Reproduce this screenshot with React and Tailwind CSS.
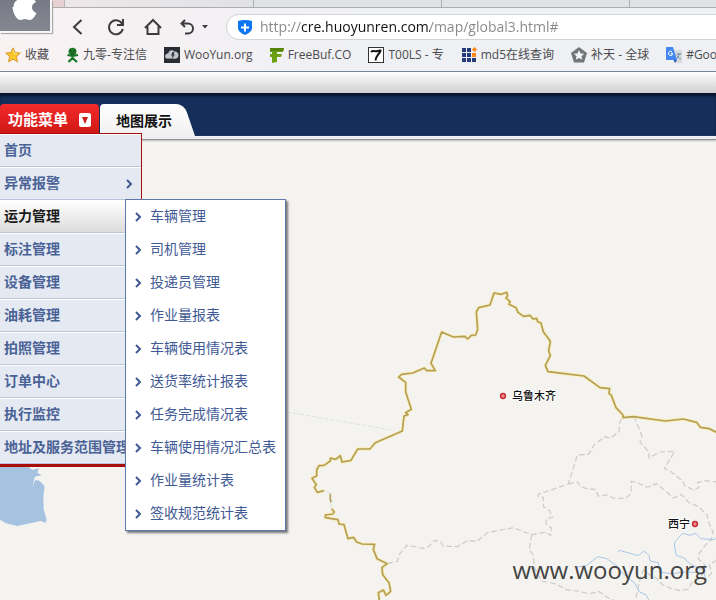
import React from "react";

const menuItems = [
  { label: "首页" },
  { label: "异常报警", arrow: true },
  { label: "运力管理", active: true },
  { label: "标注管理" },
  { label: "设备管理" },
  { label: "油耗管理" },
  { label: "拍照管理" },
  { label: "订单中心" },
  { label: "执行监控" },
  { label: "地址及服务范围管理" },
];

const subItems = [
  "车辆管理",
  "司机管理",
  "投递员管理",
  "作业量报表",
  "车辆使用情况表",
  "送货率统计报表",
  "任务完成情况表",
  "车辆使用情况汇总表",
  "作业量统计表",
  "签收规范统计表",
];

function Chevron() {
  return (
    <svg viewBox="0 0 7 10" className="h-[10px] w-[7px] shrink-0" fill="none" stroke="#3f5a94" strokeWidth="2" aria-hidden="true">
      <path d="M1 1l4 4-4 4" />
    </svg>
  );
}

function StarIcon() {
  return (
    <svg viewBox="0 0 16 16" className="size-4" aria-hidden="true">
      <path d="M8 .8l2.1 4.8 5.2.5-3.9 3.5 1.1 5.2L8 12.1l-4.5 2.7 1.1-5.2L.7 6.1l5.2-.5z" fill="#fbc52d" stroke="#d79a2b" strokeWidth="1" strokeLinejoin="round" />
      <path d="M8 3.2l1.1 3.2 3 .4" fill="none" stroke="#ffe98c" />
    </svg>
  );
}

function FigureIcon() {
  return (
    <svg viewBox="0 0 12 16" className="h-4 w-[13px]" aria-hidden="true">
      <path d="M6 9L1 8M6 9l5.500-1M6 8v4M6 11l-4 4M6 11l4.500 4" stroke="#137526" strokeWidth="2.200" />
      <ellipse cx="6" cy="4.600" rx="4" ry="3.900" fill="#1f7a2b" />
      <path d="M3.400 3.200l2 1.600M8.600 3.200l-2 1.600M4.500 7h3" stroke="#0a3d16" />
    </svg>
  );
}

function CloudIcon() {
  return (
    <svg viewBox="0 0 16 16" className="size-4" aria-hidden="true">
      <rect width="16" height="16" fill="#272c35" />
      <path d="M2 11.500C0 9 2 6.500 4.200 6.600 4.500 3 8.500 2 10.300 4.600c2.600-.3 4.500 2 4.200 4.200-.2 2-1.700 2.800-3.500 2.900z" fill="#c3c6ca" />
      <path d="M8.500 5L7 8.500h1.500L7.500 12.500l3.500-5H9.500l1-2.500z" fill="#343943" />
    </svg>
  );
}

function FIcon() {
  return (
    <svg viewBox="0 0 14 16" className="h-4 w-[14px]" aria-hidden="true">
      <path d="M0 1h14l-1 4H7v2h5l-1 3H7v5l-5 1v-6H0V7h2V5H0z" fill="#6ba011" />
      <path d="M0 1h14l-1 3H0z" fill="#548507" />
    </svg>
  );
}

function SevenIcon() {
  return (
    <svg viewBox="0 0 16 16" className="size-4" aria-hidden="true">
      <rect x=".5" y=".5" width="15" height="15" fill="#fff" stroke="#333" />
      <path d="M3 5c2-2.500 4 0 6-.8 1.500-.6 2.500-1 3.500-.7C12 7 8 8 7.500 13.500" fill="none" stroke="#111" strokeWidth="2" />
    </svg>
  );
}

function GridIcon() {
  return (
    <svg viewBox="0 0 16 16" className="size-4" aria-hidden="true">
      <g fill="#253a78">
        <path d="M1 1h4v4H1zM6 1h4v4H6zM1 6h4v4H1zM6 6h4v4H6zM1 11h4v4H1zM6 11h4v4H6zM11 11h4v4h-4z" />
      </g>
      <path d="M11 6h4v4h-4zM13.500 0l2.500 2.500L13.500 5 11 2.500z" fill="#ff8510" />
    </svg>
  );
}

function PentagonIcon() {
  return (
    <svg viewBox="0 0 16 16" className="size-4" aria-hidden="true">
      <path d="M8 0l8 6-3 9.500H3L0 6z" fill="#747577" />
      <path d="M8 3l1.500 3.400 3.700.3-2.800 2.500.9 3.600L8 10.900l-3.300 1.900.9-3.600-2.800-2.500 3.700-.3z" fill="#f4f5f7" />
    </svg>
  );
}

function TranslateIcon() {
  return (
    <svg viewBox="0 0 16 16" className="size-4" aria-hidden="true">
      <path d="M7 3h9v13H9z" fill="#d8dadd" />
      <path d="M10.500 7h5M13 6v1c0 2-1 4-3 5M11 8.500c1 2 2 3 4 3.500" stroke="#6f8ea5" fill="none" />
      <path d="M0 1q0-1 1-1h6l4 13H1q-1 0-1-1z" fill="#4587f1" />
      <path d="M7.500 13H11l-2 3z" fill="#2857b8" />
      <path d="M6 4.800a2.100 2.100 0 1 0 .7 1.700H4.800" stroke="#fff" fill="none" />
    </svg>
  );
}

const bookmarks = [
  { label: "收藏", Icon: StarIcon },
  { label: "九零-专注信", Icon: FigureIcon },
  { label: "WooYun.org", Icon: CloudIcon },
  { label: "FreeBuf.CO", Icon: FIcon },
  { label: "T00LS - 专", Icon: SevenIcon },
  { label: "md5在线查询", Icon: GridIcon },
  { label: "补天 - 全球", Icon: PentagonIcon },
  { label: "#Goo", Icon: TranslateIcon },
];

function BrowserChrome() {
  return (
    <header className="relative h-[72px] overflow-hidden border-b border-[#77869a] bg-linear-to-r from-[#f9f2f3] via-[#eff0f4] to-[#eef0f3] font-['Open_Sans','Noto_Sans_CJK_SC',sans-serif]">
      <div className="flex h-2 border-b border-[#acadb1] bg-[#e1e2e5]">
        <span className="w-[65px] shrink-0 border-r border-[#b9b5b8] bg-[#e8d1d3]" />
        <span className="w-[189px] shrink-0 border-r border-[#acadb1] bg-linear-to-r from-[#eee7e9] to-[#e1e2e5]" />
        <span className="w-[188px] shrink-0 border-r border-[#acadb1]" />
        <span className="w-[188px] shrink-0 border-r border-[#acadb1]" />
      </div>

      <div className="absolute top-0 left-0 h-[33px] w-[52px] border-r-2 border-b-2 border-[#f6f4f5] bg-linear-to-b from-[#777985] to-[#858791] shadow-[1px_1px_1px_#aaa]">
        <svg viewBox="0 0 52 32" className="h-8 w-[52px]" aria-label="Apple" role="img">
          <path d="M13.500 7C13.500 2 17-1 21-1c2 0 3 1 5 1s3-1 5-1c2 0 4 1 5 3-3 1.500-4 3-4 5.500 0 2.500 1.500 4.500 4.500 5.500-1.500 3.500-4 7-7 7-2 0-2.500-1-4.500-1s-2.500 1-4.500 1c-4 0-8-8-8-13z" fill="#fff" />
        </svg>
      </div>

      <div className="flex h-[35px] items-center pt-[3px] text-[#3c3c3e]">
        <div className="flex w-[226px] shrink-0 items-center pl-[71px]">
          <button type="button" aria-label="后退" className="mr-6">
            <svg viewBox="0 0 12 16" className="h-4 w-3" fill="none" stroke="currentColor" strokeWidth="2">
              <path d="M10.500 1L3 8l7.500 7" />
            </svg>
          </button>
          <button type="button" aria-label="刷新" className="mr-[19px]">
            <svg viewBox="0 0 18 18" className="size-[18px]" fill="none" stroke="currentColor" strokeWidth="2">
              <path d="M15.200 6A7 7 0 1 0 15.800 11M16 1v6h-6" />
            </svg>
          </button>
          <button type="button" aria-label="主页" className="mr-[18px]">
            <svg viewBox="0 0 18 18" className="size-[18px]" fill="none" stroke="currentColor" strokeWidth="2">
              <path d="M1 10l8-8 8 8M3.500 8.500V16h11V8.500" />
            </svg>
          </button>
          <button type="button" aria-label="恢复" className="flex items-center gap-2">
            <svg viewBox="0 0 14 16" className="h-4 w-[14px]" fill="none" stroke="currentColor" strokeWidth="2">
              <path d="M5 1L1.500 4.500 5 8M1.500 4.500H8a4.800 4.800 0 0 1 0 10H5" />
            </svg>
            <svg viewBox="0 0 6 4" className="h-1 w-[6px]" aria-hidden="true">
              <path d="M0 0h6L3 3.500z" fill="currentColor" />
            </svg>
          </button>
        </div>
        <div className="-mr-5 flex h-[26px] flex-1 items-center gap-2 rounded-full border border-[#d3d4d8] bg-white pl-[11px]">
          <svg viewBox="0 0 14 15" className="h-[15px] w-[14px] shrink-0" aria-hidden="true">
            <path d="M0 1q7-2 14 0v7q0 4-7 7-7-3-7-7z" fill="#0c75f6" />
            <path d="M7 3.500v8M3 7.500h8" stroke="#fff" strokeWidth="2" />
          </svg>
          <input
            type="text"
            aria-label="地址"
            defaultValue="http://cre.huoyunren.com/map/global3.html#"
            className="min-w-0 flex-1 bg-[linear-gradient(90deg,#87878a_41px,#111_41px,#111_170px,#87878a_170px)] bg-clip-text text-[14px] leading-5 text-transparent outline-none"
          />
        </div>
      </div>

      <nav className="flex items-center gap-[17px] pl-[5px] text-[12px] text-[#4b4b4e]">
        {bookmarks.map(({ label, Icon }) => (
          <a key={label} href="#" className="flex h-6 shrink-0 items-center gap-1 whitespace-nowrap">
            <Icon />
            {label}
          </a>
        ))}
      </nav>
    </header>
  );
}

function MainMenu() {
  return (
    <ul className="absolute top-full left-0 z-10 w-[142px] border-t border-r border-b-3 border-[#a80f0b] text-[14px] font-bold text-[#4a6296]">
      {menuItems.map((item) => (
        <li key={item.label} className="relative">
          <a
            href="#"
            className={`flex h-[33px] items-center justify-between border-t border-b border-t-white border-b-[#b9c4dd] pr-2 pl-1 whitespace-nowrap ${
              item.active ? "bg-linear-to-b from-white to-[#dcdcdc] text-[#1a1a1a]" : "bg-[#e4e9f2]"
            }`}
          >
            <span className="pb-[2px]">{item.label}</span>
            {item.arrow && <Chevron />}
          </a>
          {item.active && <SubMenu />}
        </li>
      ))}
    </ul>
  );
}

function SubMenu() {
  return (
    <ul className="absolute -top-px left-[125px] z-20 w-[161px] border border-[#5f79ad] bg-white font-normal text-[#3f5a94] shadow-[2px_2px_2px_#777]">
      {subItems.map((label) => (
        <li key={label}>
          <a href="#" className="flex h-[33px] items-center gap-2 pl-[9px] whitespace-nowrap">
            <Chevron />
            <span className="pb-[2px]">{label}</span>
          </a>
        </li>
      ))}
    </ul>
  );
}

function AppBar() {
  return (
    <div className="relative z-10">
      <div className="h-[21px] bg-linear-to-b from-white to-[#cfcfcf]" />
      <div className="flex h-[43px] items-start bg-[#152f5a] pt-[11px] text-[15px] shadow-[inset_0_4px_3px_-1px_#07142c]">
        <div className="relative mr-px">
          <button type="button" className="flex h-[29px] w-[99px] items-center gap-[11px] rounded-t bg-linear-to-b from-[#f52a2b] to-[#cf1713] pt-[2px] pl-2 font-bold text-white">
            功能菜单
            <svg viewBox="0 0 12 14" className="h-[14px] w-3 shrink-0" aria-hidden="true">
              <rect width="12" height="14" rx="2" fill="#fff" />
              <path d="M3 4h6l-3 7z" fill="#c9201e" />
            </svg>
          </button>
          <MainMenu />
        </div>
        <button
          type="button"
          className="relative h-8 w-[84px] pl-4 text-left text-[14px] font-bold whitespace-nowrap text-[#111] before:absolute before:top-0 before:left-0 before:h-8 before:w-[72px] before:rounded-tl before:bg-linear-to-b before:from-white before:to-[#f0f0f0] after:absolute after:top-0 after:right-0 after:h-8 after:w-8 after:origin-top after:skew-x-[19deg] after:rounded-tr-lg after:bg-linear-to-b after:from-white after:to-[#f0f0f0]"
        >
          <span className="relative z-10">地图展示</span>
        </button>
      </div>
      <div className="h-1 border-b border-[#929294] bg-[#efefef] shadow-[0_1px_2px_#bbb]" />
    </div>
  );
}

const borderLine =
  "M268 962L265 938 280 930 288 946 302 934 297 908 278 884 276 862 292 851 261 836 250 808 254 793 216 792 200 786 190 772 174 776 162 734 147 732 144 719 106 713 106 705 128 702 133 696 125 686";
const borderLine2 =
  "M102 632L82 637 73 622 79 614 66 595 80 588 80 570 87 557 102 556 121 543 121 534 137 538 151 527 156 546 183 541 203 507 240 507 256 488 337 453 342 408 354 404 347 398 364 388 347 336 347 307 326 291 335 283 368 279 403 264 410 272 436 272 423 250 455 156 490 171 524 169 533 177 544 166 557 165 563 148 559 96 566 83 600 75 612 39 634 43 650 37 653 47 648 54 660 65 657 73 678 83 684 97 701 109 720 106 729 117 740 115 743 125 753 129 760 155 781 184 776 212 781 227 766 256 774 275 882 288 930 323 959 326 957 341 964 346 978 383 999 405 999 413 1030 410 1126 423 1180 417 1220 427 1231 442 1258 446 1280 457";

function MapCanvas() {
  return (
    <main className="relative flex-1 overflow-hidden bg-[#f4f3ef]">
      <svg viewBox="0 140 716 460" preserveAspectRatio="xMinYMin slice" className="absolute inset-0 size-full" fill="none" role="img" aria-label="地图">
        <g transform="translate(0 300) scale(.33333)">
          <path d="M-5 480H88V503L98 510 116 505 112 518 125 526 104 530 98 562 106 540 118 542 134 559 130 590 131 628 140 660 137 668 122 663 52 678 18 670-5 656z" fill="#a5c2e0" />
          <path d="M860 336L1180 391" stroke="#dde2e6" strokeWidth="3" strokeDasharray="14 5" />
        </g>
        <g transform="translate(290 280) scale(.33333)" strokeLinejoin="round">
          <g stroke="#cbcac9" strokeWidth="3.500" strokeDasharray="17 8">
            <path d="M292 851L322 844 330 820 350 796 402 805 416 800 434 781 451 784 460 799 502 800 534 781 560 785 592 758 670 743 725 764 766 757 782 766 784 744 768 732 769 716 788 712 777 690 760 680 760 652 744 649 745 643 835 612 862 525 896 523 912 495 944 470 961 475 987 455 990 424 999 413" />
            <path d="M835 612L864 606 870 619 893 627 916 628 925 648 953 645 970 654 992 655 1010 653 1023 640 1024 604 1044 609 1072 622 1100 611 1130 636 1150 654 1174 643 1197 668 1226 680 1252 706 1254 723 1270 758 1263 780 1250 790 1228 820 1225 836 1245 855 1240 880 1222 900 1205 908 1196 927 1170 932 1142 925 1118 915 1100 895 1080 885 1060 870 1048 905 1036 962" />
            <path d="M1032 410L1056 467 1050 485 1076 516 1077 534 1110 516 1154 514 1123 566 1143 575 1180 605 1182 615 1212 631 1227 622 1222 608 1246 602 1280 606" />
            <path d="M725 764L718 810 730 825 733 862 755 903 798 912 830 929 862 933 897 941 928 935 954 953 975 962" />
            <path d="M1280 840L1258 853 1265 880 1248 895" />
          </g>
          <g stroke="#a9c6e6" strokeWidth="3">
            <path d="M859 862L890 856 924 830 950 836 980 857 996 878 1035 910 1048 936 1067 944 1078 962" />
            <path d="M984 817L988 811 1045 827 1061 813 1077 826 1080 843 1105 848 1108 877 1150 881 1180 876 1240 878" />
            <path d="M1280 772L1273 779 1232 776 1217 760 1200 766 1178 760 1155 784 1153 796 1159 826 1182 834 1202 853 1240 870 1245 890" />
          </g>
          <path d="M102 632l19 9v25l4 20" stroke="#d5d4d3" strokeWidth="2" />
          <g stroke="#faedb9" strokeWidth="10">
            <path d={borderLine} />
            <path d={borderLine2} />
          </g>
          <g stroke="#b49f57" strokeWidth="5">
            <path d={borderLine} />
            <path d={borderLine2} />
            <path d="M121 641v18l3 8" />
          </g>
        </g>
        <g fill="#ef8c8c" stroke="#c72b32" strokeWidth="1.500">
          <circle cx="503" cy="396" r="2.400" />
          <circle cx="695" cy="524" r="2.400" />
        </g>
        <g fill="#111" stroke="#fff" strokeWidth="2" paintOrder="stroke" className="font-['Noto_Sans_CJK_SC',sans-serif] text-[11px] font-medium">
          <text x="512" y="400">乌鲁木齐</text>
          <text x="668" y="528">西宁</text>
        </g>
      </svg>
      <p className="absolute right-[9px] bottom-[14px] font-['Open_Sans',sans-serif] text-[24px] leading-8 text-[#444]">www.wooyun.org</p>
    </main>
  );
}

export default function App() {
  return (
    <div className="flex min-h-screen flex-col overflow-hidden font-['Noto_Sans_CJK_SC',sans-serif]">
      <BrowserChrome />
      <AppBar />
      <MapCanvas />
    </div>
  );
}
